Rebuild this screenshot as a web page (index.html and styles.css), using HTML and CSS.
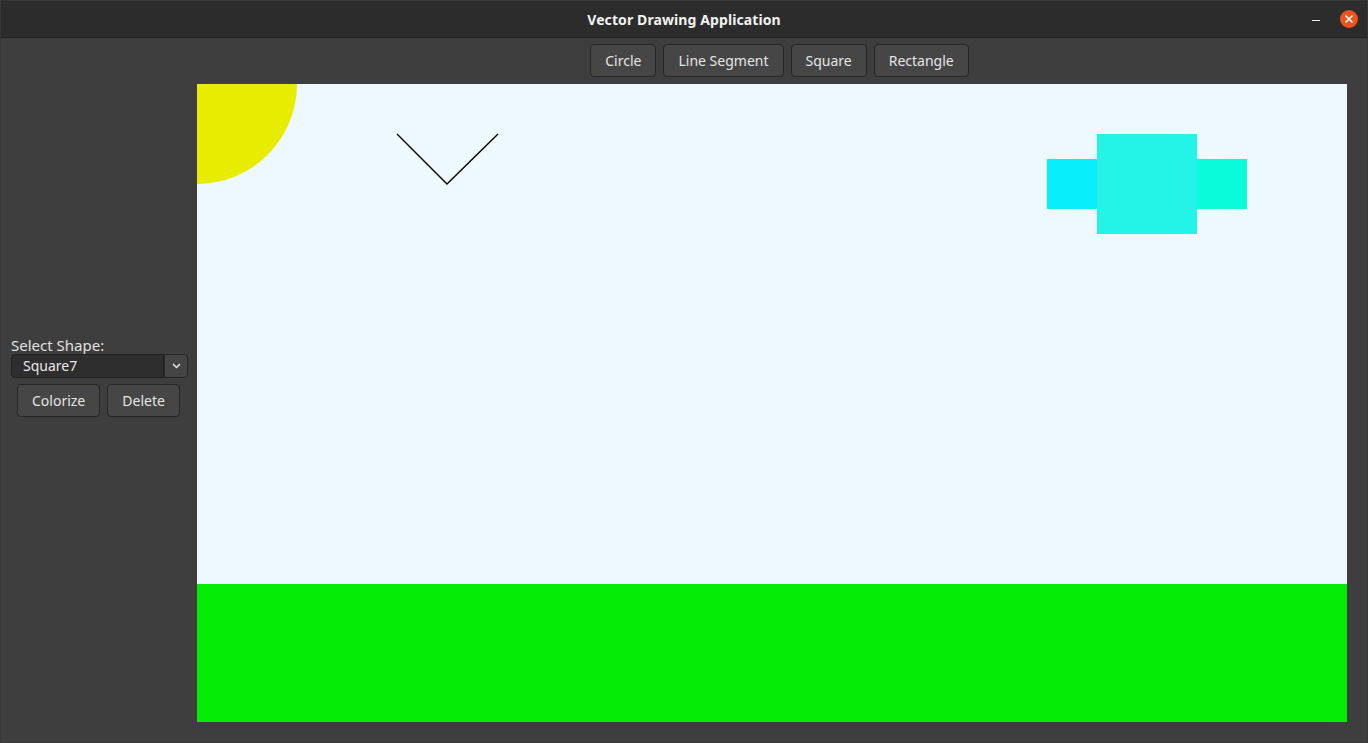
FILE: index.html
```html
<!DOCTYPE html>
<html>
<head>
<meta charset="utf-8">
<title>Vector Drawing Application</title>
<link rel="stylesheet" href="styles.css">
</head>
<body>
<div class="window">
  <header class="titlebar">
    <div class="title">Vector Drawing Application</div>
    <div class="controls">
      <span class="minimize"></span>
      <span class="close">
        <svg width="18" height="18" viewBox="0 0 18 18"><circle cx="9" cy="9" r="9" fill="#e95420"/><path d="M5.5 5.5 L12.5 12.5 M12.5 5.5 L5.5 12.5" stroke="#fff" stroke-width="1.6"/></svg>
      </span>
    </div>
  </header>
  <div class="content">
    <div class="toolbar">
      <button class="btn">Circle</button>
      <button class="btn">Line Segment</button>
      <button class="btn">Square</button>
      <button class="btn">Rectangle</button>
    </div>
    <div class="main">
      <aside class="side">
        <div class="label">Select Shape:</div>
        <div class="combo">
          <div class="combo-field">Square7</div>
          <div class="combo-btn">
            <svg width="9" height="6" viewBox="0 0 9 6"><path d="M1 1 L4.5 4.5 L8 1" fill="none" stroke="#e6e6e6" stroke-width="1.5"/></svg>
          </div>
        </div>
        <div class="actions">
          <button class="btn">Colorize</button>
          <button class="btn">Delete</button>
        </div>
      </aside>
      <div class="canvas">
        <svg width="1150" height="638" viewBox="0 0 1150 638">
          <rect x="0" y="0" width="1150" height="638" fill="#eef9ff"/>
          <rect x="0" y="500" width="1150" height="138" fill="#05ed05"/>
          <circle cx="0" cy="0" r="100" fill="#e8ec00"/>
          <polyline points="200,50 250,100 301,50" fill="none" stroke="#000" stroke-width="1.4"/>
          <rect x="850" y="75" width="50" height="50" fill="#08eefa"/>
          <rect x="1000" y="75" width="50" height="50" fill="#0afbd9"/>
          <rect x="900" y="50" width="100" height="100" fill="#24f4e8"/>
        </svg>
      </div>
    </div>
  </div>
</div>
</body>
</html>
```
FILE: styles.css
```css
* { box-sizing: border-box; }
html, body { margin: 0; padding: 0; background: #3e3e3e; }
body { font-family: "Noto Sans", "Open Sans", sans-serif; }
.window {
  width: 1368px;
  height: 743px;
  border: 1px solid #383838;
  background: #3e3e3e;
  display: flex;
  flex-direction: column;
}
.titlebar {
  height: 37px;
  flex: none;
  background: #2c2c2c;
  border-bottom: 1px solid #242424;
  display: flex;
  align-items: center;
  justify-content: center;
  position: relative;
}
.title {
  color: #f2f2f2;
  font-weight: bold;
  font-size: 14px;
  letter-spacing: 0.1px;
}
.controls {
  position: absolute;
  right: 9px;
  top: 9px;
  display: flex;
  align-items: center;
  gap: 20px;
}
.minimize {
  width: 8px;
  height: 1.5px;
  background: #ececec;
  margin-top: 3px;
}
.close { display: flex; }
.content {
  flex: 1;
  display: flex;
  flex-direction: column;
}
.toolbar {
  display: flex;
  justify-content: center;
  gap: 7px;
  padding: 6px 0 7px 191px;
}
.btn {
  height: 33px;
  padding: 0 14px;
  background: #464646;
  border: 1px solid #262626;
  border-radius: 4px;
  color: #e4e4e4;
  font-family: "Noto Sans", "Open Sans", sans-serif;
  font-size: 14px;
}
.main {
  flex: 1;
  display: flex;
}
.side {
  width: 196px;
  flex: none;
  padding: 252px 0 0 10px;
  display: flex;
  flex-direction: column;
}
.label {
  color: #e0e0e0;
  font-size: 15px;
  line-height: 18px;
}
.combo {
  display: flex;
  width: 177px;
  height: 24px;
}
.combo-field {
  flex: 1;
  background: #2e2e2e;
  border: 1px solid #222;
  border-radius: 4px 0 0 4px;
  color: #e8e8e8;
  font-size: 14px;
  line-height: 22px;
  padding-left: 11px;
}
.combo-btn {
  width: 24px;
  background: #454545;
  border: 1px solid #262626;
  border-radius: 0 4px 4px 0;
  display: flex;
  align-items: center;
  justify-content: center;
}
.actions {
  display: flex;
  gap: 7px;
  margin-top: 6px;
  padding-left: 6px;
}
.canvas {
  width: 1150px;
  height: 638px;
  flex: none;
  line-height: 0;
}
.canvas svg { display: block; }
```
